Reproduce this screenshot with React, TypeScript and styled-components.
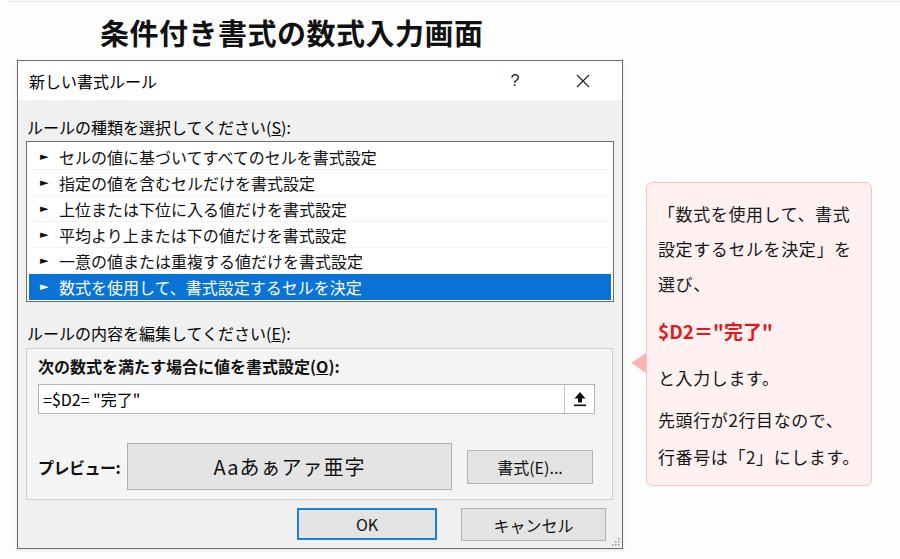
import styled, { createGlobalStyle } from 'styled-components';

const GlobalStyle = createGlobalStyle`
  html, body {
    margin: 0;
    padding: 0;
    background: #fdfdfd;
    font-family: "Noto Sans CJK JP", "Noto Sans", sans-serif;
    color: #111;
  }
`;

const ruleTypes = [
  'セルの値に基づいてすべてのセルを書式設定',
  '指定の値を含むセルだけを書式設定',
  '上位または下位に入る値だけを書式設定',
  '平均より上または下の値だけを書式設定',
  '一意の値または重複する値だけを書式設定',
  '数式を使用して、書式設定するセルを決定',
];

export default function App(): JSX.Element {
  return (
    <Page>
      <GlobalStyle />
      <TopRule />
      <Heading>条件付き書式の数式入力画面</Heading>
      <Main>
        <Dialog>
          <TitleBar>
            <DialogTitle>新しい書式ルール</DialogTitle>
            <TitleButton>?</TitleButton>
            <TitleButton>
              <svg width="16" height="16" viewBox="0 0 16 16">
                <path d="M2 2 L14 14 M14 2 L2 14" stroke="#222" strokeWidth="1.2" />
              </svg>
            </TitleButton>
          </TitleBar>
          <DialogBody>
            <FieldLabel>
              ルールの種類を選択してください(<u>S</u>):
            </FieldLabel>
            <ListBox>
              {ruleTypes.map((text, idx) => (
                <RuleRow key={text} selected={idx === ruleTypes.length - 1}>
                  <Bullet>►</Bullet>
                  {text}
                </RuleRow>
              ))}
            </ListBox>
            <FieldLabel $gap={20}>
              ルールの内容を編集してください(<u>E</u>):
            </FieldLabel>
            <GroupBox>
              <GroupLabel>
                次の数式を満たす場合に値を書式設定(<u>O</u>):
              </GroupLabel>
              <FormulaField>
                <FormulaText>=$D2= "完了"</FormulaText>
                <CollapseButton>
                  <svg width="16" height="18" viewBox="0 0 16 18">
                    <path d="M8 2 L13.5 8.5 L10 8.5 L10 12.5 L6 12.5 L6 8.5 L2.5 8.5 Z" fill="#111" />
                    <rect x="2" y="14.5" width="12" height="1.6" fill="#111" />
                  </svg>
                </CollapseButton>
              </FormulaField>
              <PreviewRow>
                <PreviewLabel>プレビュー:</PreviewLabel>
                <PreviewBox>Aaあぁアァ亜字</PreviewBox>
                <PushButton $w={126} $h={34}>書式(E)...</PushButton>
              </PreviewRow>
            </GroupBox>
            <Footer>
              <PushButton $w={140} $h={32} $default>OK</PushButton>
              <PushButton $w={145} $h={33}>キャンセル</PushButton>
            </Footer>
            <SizeGrip>
              <svg width="9" height="9" viewBox="0 0 9 9">
                {[
                  [7, 1], [4, 4], [7, 4], [1, 7], [4, 7], [7, 7],
                ].map(([x, y]) => (
                  <rect key={`${x}-${y}`} x={x} y={y} width="1.6" height="1.6" fill="#a0a0a0" />
                ))}
              </svg>
            </SizeGrip>
          </DialogBody>
        </Dialog>
        <Callout>
          <Note $lh={35}>
            「数式を使用して、書式
            <br />
            設定するセルを決定」を
            <br />
            選び、
          </Note>
          <Formula>$D2＝"完了"</Formula>
          <Note $lh={35} $top={12}>と入力します。</Note>
          <Note $lh={37} $top={6}>
            先頭行が2行目なので、
            <br />
            行番号は「2」にします。
          </Note>
        </Callout>
      </Main>
    </Page>
  );
}

const Page = styled.div`
  width: 900px;
  height: 559px;
  padding-top: 1px;
  box-sizing: border-box;
  overflow: hidden;
`;

const TopRule = styled.div`
  height: 1px;
  margin-left: 7px;
  background: #e4e4e4;
`;

const Heading = styled.h1`
  margin: 12px 0 0 100px;
  font-size: 29px;
  line-height: 36px;
  font-weight: 700;
  color: #111;
  letter-spacing: 0.5px;
`;

const Main = styled.div`
  display: flex;
  align-items: flex-start;
  margin-top: 10px;
  padding-left: 17px;
`;

const Dialog = styled.div`
  width: 606px;
  height: 489px;
  box-sizing: border-box;
  border: 1px solid #6e6e6e;
  background: #f0f0f0;
  display: flex;
  flex-direction: column;
  box-shadow: 0 1px 3px rgba(0, 0, 0, 0.12);
`;

const TitleBar = styled.div`
  height: 39px;
  background: #fff;
  display: flex;
  align-items: center;
  padding-left: 11px;
  padding-right: 16px;
`;

const DialogTitle = styled.span`
  flex: 1;
  font-size: 16px;
  color: #000;
`;

const TitleButton = styled.span`
  width: 46px;
  display: flex;
  justify-content: center;
  align-items: center;
  font-family: "Liberation Sans", sans-serif;
  font-size: 16px;
  color: #222;
  margin-left: 22px;
`;

const DialogBody = styled.div`
  position: relative;
  flex: 1;
  display: flex;
  flex-direction: column;
  padding: 16px 16px 0 8px;
`;

const FieldLabel = styled.div<{ $gap?: number }>`
  margin-top: ${({ $gap }) => $gap ?? 0}px;
  padding-left: 1px;
  font-size: 16px;
  line-height: 22px;
  color: #000;
`;

const ListBox = styled.div`
  margin-top: 3px;
  width: 588px;
  box-sizing: border-box;
  border: 1px solid #6f6f6f;
  background: #fff;
  padding: 2px 2px 1px;
`;

const RuleRow = styled.div<{ selected: boolean }>`
  height: 26px;
  box-sizing: border-box;
  display: flex;
  align-items: center;
  padding-left: 11px;
  font-size: 16px;
  color: ${({ selected }) => (selected ? '#fff' : '#111')};
  background: ${({ selected }) => (selected ? '#0a74d6' : 'transparent')};
  border-bottom: 1px solid ${({ selected }) => (selected ? '#0a74d6' : '#f2f2f2')};
`;

const Bullet = styled.span`
  font-size: 11px;
  width: 19px;
  font-family: "DejaVu Sans", sans-serif;
`;

const GroupBox = styled.div`
  margin-top: 4px;
  width: 587px;
  height: 152px;
  box-sizing: border-box;
  border: 1px solid #d0d0d0;
  background: #f4f4f4;
  padding: 6px 17px 0 11px;
  display: flex;
  flex-direction: column;
`;

const GroupLabel = styled.div`
  font-size: 16px;
  line-height: 22px;
  font-weight: 700;
  color: #111;
`;

const PreviewLabel = styled(GroupLabel)`
  width: 85px;
  white-space: nowrap;
  flex-shrink: 0;
  letter-spacing: -0.5px;
`;

const FormulaField = styled.div`
  margin-top: 7px;
  height: 30px;
  box-sizing: border-box;
  display: flex;
  border: 1px solid #b4b4b4;
  background: #fff;
`;

const FormulaText = styled.span`
  flex: 1;
  padding-left: 4px;
  font-size: 16px;
  line-height: 28px;
  color: #000;
`;

const CollapseButton = styled.span`
  width: 29px;
  border-left: 1px solid #c4c4c4;
  display: flex;
  align-items: center;
  justify-content: center;
`;

const PreviewRow = styled.div`
  margin-top: 29px;
  display: flex;
  align-items: center;
`;

const PreviewBox = styled.div`
  margin-left: 4px;
  width: 325px;
  height: 47px;
  flex-shrink: 0;
  box-sizing: border-box;
  border: 1px solid #b0b0b0;
  background: #e4e4e4;
  display: flex;
  align-items: center;
  justify-content: center;
  font-size: 20px;
  color: #111;
  letter-spacing: 1px;
`;

const PushButton = styled.div<{ $w: number; $h: number; $default?: boolean }>`
  width: ${({ $w }) => $w}px;
  height: ${({ $h }) => $h}px;
  flex-shrink: 0;
  box-sizing: border-box;
  margin-left: 15px;
  border: ${({ $default }) => ($default ? '2px solid #1a7fd8' : '1px solid #b3b3b3')};
  background: #e3e3e3;
  display: flex;
  align-items: center;
  justify-content: center;
  font-size: 16px;
  color: #111;
`;

const Footer = styled.div`
  margin-top: 8px;
  display: flex;
  justify-content: flex-end;
  gap: 9px;
`;

const SizeGrip = styled.span`
  position: absolute;
  right: 2px;
  bottom: 2px;
  display: flex;
`;

const Callout = styled.div`
  position: relative;
  margin-left: 23px;
  margin-top: 122px;
  width: 226px;
  height: 304px;
  box-sizing: border-box;
  border: 1px solid #f6c4c4;
  border-radius: 6px;
  background: #fff1f1;
  padding: 13px 4px 0 11px;
  white-space: nowrap;

  &::before {
    content: '';
    position: absolute;
    left: -16px;
    top: 170px;
    border-style: solid;
    border-width: 10px 15px 10px 0;
    border-color: transparent #f9b4b4 transparent transparent;
  }
`;

const Note = styled.p<{ $lh: number; $top?: number }>`
  margin: ${({ $top }) => $top ?? 0}px 0 0;
  font-size: 17px;
  line-height: ${({ $lh }) => $lh}px;
  letter-spacing: 0.6px;
  color: #161616;
`;

const Formula = styled.p`
  margin: 12px 0 0;
  font-size: 19px;
  line-height: 35px;
  font-weight: 700;
  color: #e01a1a;
`;
